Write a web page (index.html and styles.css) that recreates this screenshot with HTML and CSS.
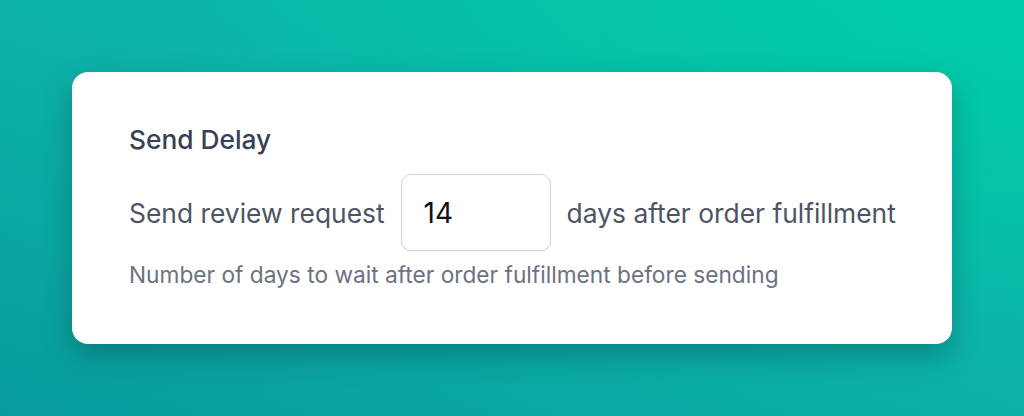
FILE: index.html
```html
<!DOCTYPE html>
<html>
<head>
<meta charset="utf-8">
<link rel="stylesheet" href="styles.css">
</head>
<body>
<div class="page">
  <div class="card">
    <h2 class="title">Send Delay</h2>
    <div class="row">
      <span class="label">Send review request</span>
      <input class="days" type="text" value="14">
      <span class="label">days after order fulfillment</span>
    </div>
    <p class="help">Number of days to wait after order fulfillment before sending</p>
  </div>
</div>
</body>
</html>
```
FILE: styles.css
```css
html, body {
  margin: 0;
  padding: 0;
}
body {
  width: 1024px;
  height: 416px;
  overflow: hidden;
  font-family: Inter, "Noto Sans", sans-serif;
}
.page {
  width: 1024px;
  height: 416px;
  box-sizing: border-box;
  padding: 72px;
  background: radial-gradient(ellipse at 100% 0%, #00cba9 0%, rgba(0,203,169,0) 60%), linear-gradient(200deg, #05c3aa 0%, #0db3a9 45%, #089c9e 100%);
}
.card {
  background: #fff;
  border-radius: 16px;
  height: 272px;
  box-sizing: border-box;
  padding: 52px 57px;
  box-shadow: 0 12px 28px rgba(0, 60, 60, 0.35);
}
.title {
  margin: 0;
  font-size: 26.3px;
  font-weight: 500;
  color: #374151;
  line-height: 32px;
}
.row {
  display: flex;
  align-items: center;
  gap: 16px;
  margin-top: 18px;
}
.label {
  font-size: 26.4px;
  color: #4b5563;
  white-space: nowrap;
  flex-shrink: 0;
}
.days {
  flex-shrink: 0;
  width: 150px;
  height: 77px;
  box-sizing: border-box;
  border: 1.5px solid #d1d5db;
  border-radius: 10px;
  padding: 0 22px;
  font-family: Inter, sans-serif;
  font-size: 28px;
  color: #111;
  outline: none;
  background: #fff;
  box-shadow: 0 1px 2px rgba(0, 0, 0, 0.05);
}
.help {
  margin: 9px 0 0;
  font-size: 22.7px;
  line-height: 30px;
  color: #6b7280;
  white-space: nowrap;
}
```
